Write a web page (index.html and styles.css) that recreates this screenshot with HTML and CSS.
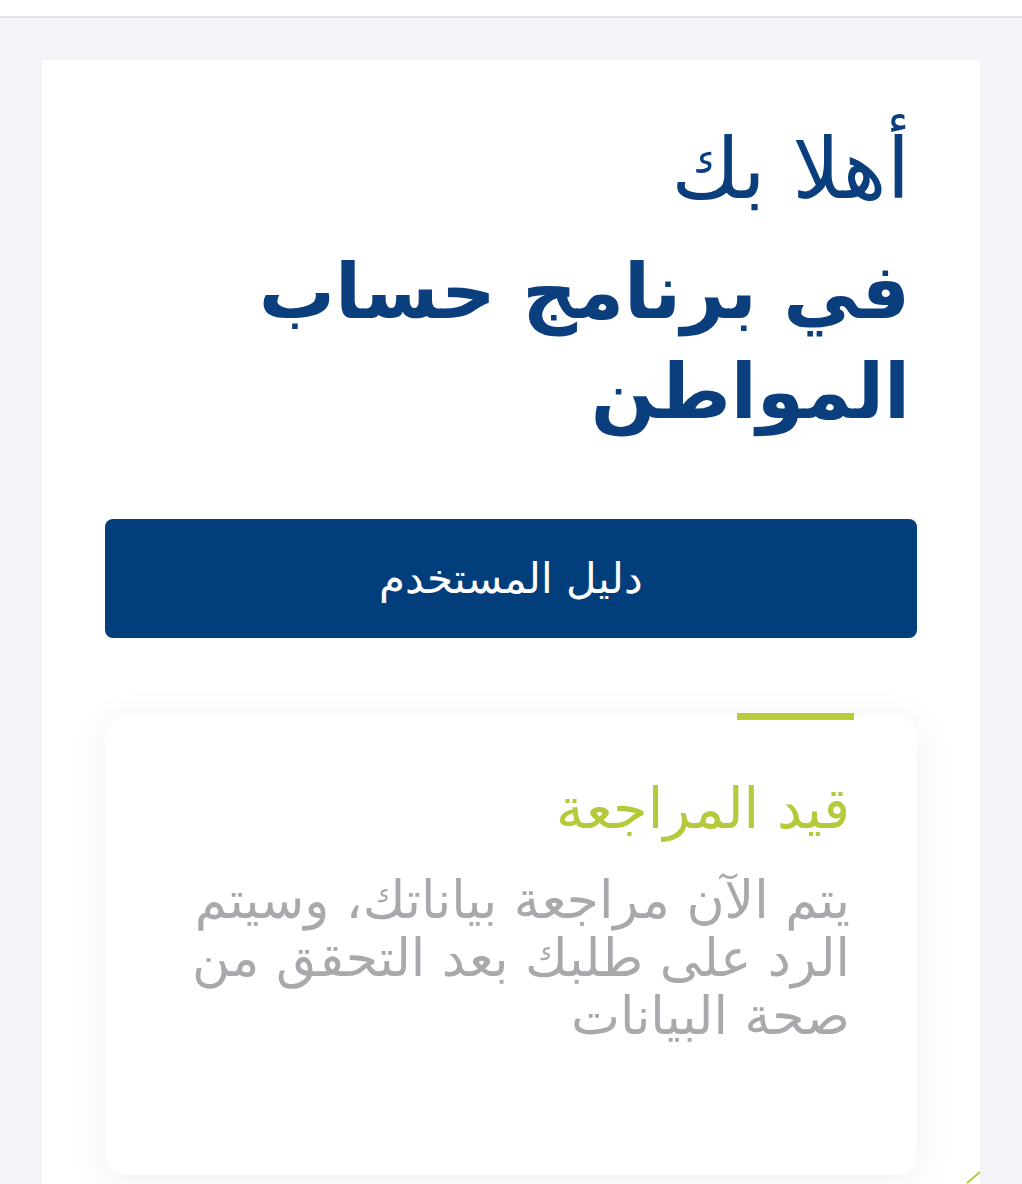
FILE: index.html
```html
<!DOCTYPE html>
<html lang="ar" dir="rtl">
<head>
<meta charset="utf-8">
<link rel="stylesheet" href="styles.css">
</head>
<body>
<div class="topbar"></div>
<main class="page">
  <section class="card">
    <h1 class="welcome">
      <span class="hello">أهلا بك</span>
      <span class="program">في برنامج حساب المواطن</span>
    </h1>
    <button class="guide">دليل المستخدم</button>
    <div class="status">
      <span class="accent"></span>
      <h2 class="status-title">قيد المراجعة</h2>
      <p class="status-text">يتم الآن مراجعة بياناتك، وسيتم الرد على طلبك بعد التحقق من صحة البيانات</p>
    </div>
  </section>
  <svg class="corner" width="16" height="14" viewBox="0 0 16 14"><path d="M1 13 L14 2" stroke="#b5c93a" stroke-width="2" fill="none"/></svg>
</main>
</body>
</html>
```
FILE: styles.css
```css
html, body {
  margin: 0;
  padding: 0;
}
body {
  background: #f4f4f8;
  font-family: "DejaVu Sans", "Noto Sans", sans-serif;
  height: 1184px;
  overflow: hidden;
}
.topbar {
  height: 16px;
  background: #ffffff;
  border-bottom: 2px solid #e2e2e8;
}
.page {
  position: relative;
  padding: 42px 42px 0 42px;
}
.card {
  background: #ffffff;
  padding: 54px 63px 40px 63px;
  min-height: 1200px;
  box-sizing: border-box;
}
.welcome {
  margin: 0;
  padding: 0 7px 0 0;
  color: #0b3e7d;
  display: flex;
  flex-direction: column;
}
.hello {
  font-size: 84px;
  font-weight: normal;
  line-height: 110px;
}
.program {
  margin-top: 18px;
  font-size: 76px;
  font-weight: bold;
  line-height: 100px;
  max-width: 700px;
}
.guide {
  display: block;
  width: 100%;
  height: 119px;
  margin-top: 77px;
  background: #033e7c;
  color: #ffffff;
  border: none;
  border-radius: 8px;
  font-family: "DejaVu Sans", sans-serif;
  font-size: 42px;
  font-weight: 300;
}
.status {
  position: relative;
  margin-top: 78px;
  background: #ffffff;
  border-radius: 22px;
  box-shadow: 0 6px 40px rgba(30, 40, 90, 0.07);
  padding: 53px 67px 130px 75px;
}
.accent {
  position: absolute;
  top: -3px;
  right: 63px;
  width: 117px;
  height: 7px;
  background: #b8cc3b;
}
.status-title {
  margin: 0;
  color: #b5c93a;
  font-size: 56px;
  font-weight: normal;
  line-height: 80px;
}
.status-text {
  margin: 22px 0 0 0;
  color: #a9a9ad;
  font-size: 52px;
  line-height: 58px;
}
.corner {
  position: absolute;
  left: 966px;
  top: 1152px;
}
```
